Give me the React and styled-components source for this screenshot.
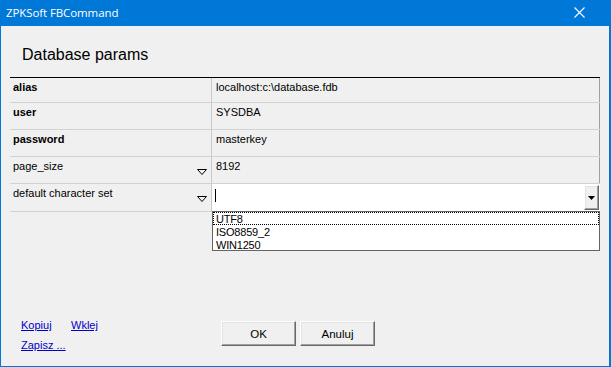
import React from "react";
import styled, { createGlobalStyle } from "styled-components";

const GlobalStyle = createGlobalStyle`
  html, body {
    margin: 0;
    padding: 0;
    background: #f0f0f0;
  }
  * {
    box-sizing: border-box;
  }
`;

const Window = styled.div`
  width: 611px;
  height: 367px;
  display: flex;
  flex-direction: column;
  background: #f0f0f0;
  border: 1px solid #0078d7;
  border-top: none;
  border-right-width: 2px;
  font-family: "Liberation Sans", Arial, sans-serif;
  font-size: 11px;
  color: #000;
`;

const TitleBar = styled.div`
  height: 26px;
  margin: 0 -2px 0 -1px;
  display: flex;
  align-items: center;
  justify-content: space-between;
  background: #0078d7;
  color: #fff;
  padding: 0 26px 1px 6px;
  font-family: "Open Sans", "Noto Sans", sans-serif;
  font-size: 11.5px;
  letter-spacing: -0.1px;
`;

const Content = styled.div`
  flex: 1;
  display: flex;
  flex-direction: column;
`;

const Heading = styled.div`
  font-size: 16px;
  line-height: 18px;
  padding: 20px 0 0 21px;
  height: 51px;
`;

const Grid = styled.div`
  margin-left: 9px;
  width: 590px;
  border-top: 1px solid #000;
`;

const Row = styled.div`
  display: grid;
  grid-template-columns: 202px 388px;
  height: ${p => p.h}px;
  border-bottom: 1px solid #d2d2d2;
`;

const LabelCell = styled.div`
  display: flex;
  justify-content: space-between;
  padding: 3px 4px 0 3px;
  border-right: 1px solid #c8c8c8;
  font-weight: ${p => (p.bold ? "bold" : "normal")};
  line-height: 13px;
`;

const ValueCell = styled.div`
  position: relative;
  padding: 3px 4px 0 4px;
  border-right: 1px solid #a0a0a0;
  line-height: 13px;
`;

const Arrow = styled.svg`
  margin-top: 9px;
  flex-shrink: 0;
`;

const Combo = styled.div`
  position: relative;
  height: 100%;
  display: flex;
  align-items: center;
  justify-content: space-between;
  background: #fff;
  padding: 0 1px 0 3px;
  margin-right: -1px;
`;

const Caret = styled.span`
  width: 1px;
  height: 13px;
  margin-top: -4px;
  background: #000;
`;

const ComboButton = styled.div`
  width: 15px;
  height: 25px;
  display: flex;
  align-items: center;
  justify-content: center;
  background: #f0f0f0;
  border-style: solid;
  border-width: 1px;
  border-color: #ffffff #696969 #696969 #ffffff;
  box-shadow: inset -1px -1px 0 #a0a0a0, inset 1px 1px 0 #e3e3e3;
`;

const DropList = styled.div`
  position: absolute;
  top: 100%;
  left: 0;
  width: 388px;
  height: 40px;
  background: #fff;
  border: 1px solid #646464;
  z-index: 2;
`;

const DropItem = styled.div`
  height: 13px;
  line-height: 12px;
  padding-left: 2px;
  font-size: 11px;
  border: 1px dotted ${p => (p.focused ? "#000" : "transparent")};
  letter-spacing: -0.2px;
`;

const Footer = styled.div`
  margin-top: auto;
  display: flex;
  padding: 0 0 14px 20px;
`;

const Links = styled.div`
  width: 200px;
  display: grid;
  grid-template-columns: 50px auto;
  row-gap: 7px;
  align-content: start;
  margin-top: -2px;
`;

const LinkText = styled.a`
  color: #0000cc;
  text-decoration: underline;
  line-height: 13px;
  cursor: pointer;
  grid-column: ${p => (p.wide ? "1 / span 2" : "auto")};
`;

const Buttons = styled.div`
  display: flex;
  gap: 4px;
`;

const Button = styled.button`
  width: 75px;
  height: 25px;
  background: #f0f0f0;
  font-family: "Liberation Sans", Arial, sans-serif;
  font-size: 11.5px;
  color: #000;
  border-style: solid;
  border-width: 1px;
  border-color: #ffffff #696969 #696969 #ffffff;
  box-shadow: inset -1px -1px 0 #a0a0a0, inset 1px 1px 0 #e3e3e3;
  padding: 0;
`;

const rows = [
  { label: "alias", value: "localhost:c:\\database.fdb", bold: true, h: 25 },
  { label: "user", value: "SYSDBA", bold: true, h: 27 },
  { label: "password", value: "masterkey", bold: true, h: 27 },
  { label: "page_size", value: "8192", arrow: true, h: 27 },
];

const charsets = ["UTF8", "ISO8859_2", "WIN1250"];

const DownOutline = () => (
  <Arrow width="10" height="6" viewBox="0 0 10 6">
    <polyline points="0.5,0.5 9.5,0.5 5,5.5 0.5,0.5" fill="none" stroke="#000" strokeWidth="1" />
  </Arrow>
);

const App = () => {
  return (
    <>
      <GlobalStyle />
      <Window>
        <TitleBar>
          <span>ZPKSoft FBCommand</span>
          <svg width="11" height="11" viewBox="0 0 11 11">
            <path d="M0.5 0.5 L10.5 10.5 M10.5 0.5 L0.5 10.5" stroke="#fff" strokeWidth="1.1" />
          </svg>
        </TitleBar>
        <Content>
          <Heading>Database params</Heading>
          <Grid>
            {rows.map(r => (
              <Row key={r.label} h={r.h}>
                <LabelCell bold={r.bold}>
                  <span>{r.label}</span>
                  {r.arrow && <DownOutline />}
                </LabelCell>
                <ValueCell>{r.value}</ValueCell>
              </Row>
            ))}
            <Row h={28}>
              <LabelCell>
                <span>default character set</span>
                <DownOutline />
              </LabelCell>
              <ValueCell style={{ padding: 0 }}>
                <Combo>
                  <Caret />
                  <ComboButton>
                    <svg width="7" height="4" viewBox="0 0 7 4">
                      <polygon points="0,0 7,0 3.5,4" fill="#000" />
                    </svg>
                  </ComboButton>
                  <DropList>
                    {charsets.map((c, i) => (
                      <DropItem key={c} focused={i === 0}>
                        {c}
                      </DropItem>
                    ))}
                  </DropList>
                </Combo>
              </ValueCell>
            </Row>
          </Grid>
          <Footer>
            <Links>
              <LinkText>Kopiuj</LinkText>
              <LinkText>Wklej</LinkText>
              <LinkText wide>Zapisz ...</LinkText>
            </Links>
            <Buttons>
              <Button>OK</Button>
              <Button>Anuluj</Button>
            </Buttons>
          </Footer>
        </Content>
      </Window>
    </>
  );
};

export default App;
